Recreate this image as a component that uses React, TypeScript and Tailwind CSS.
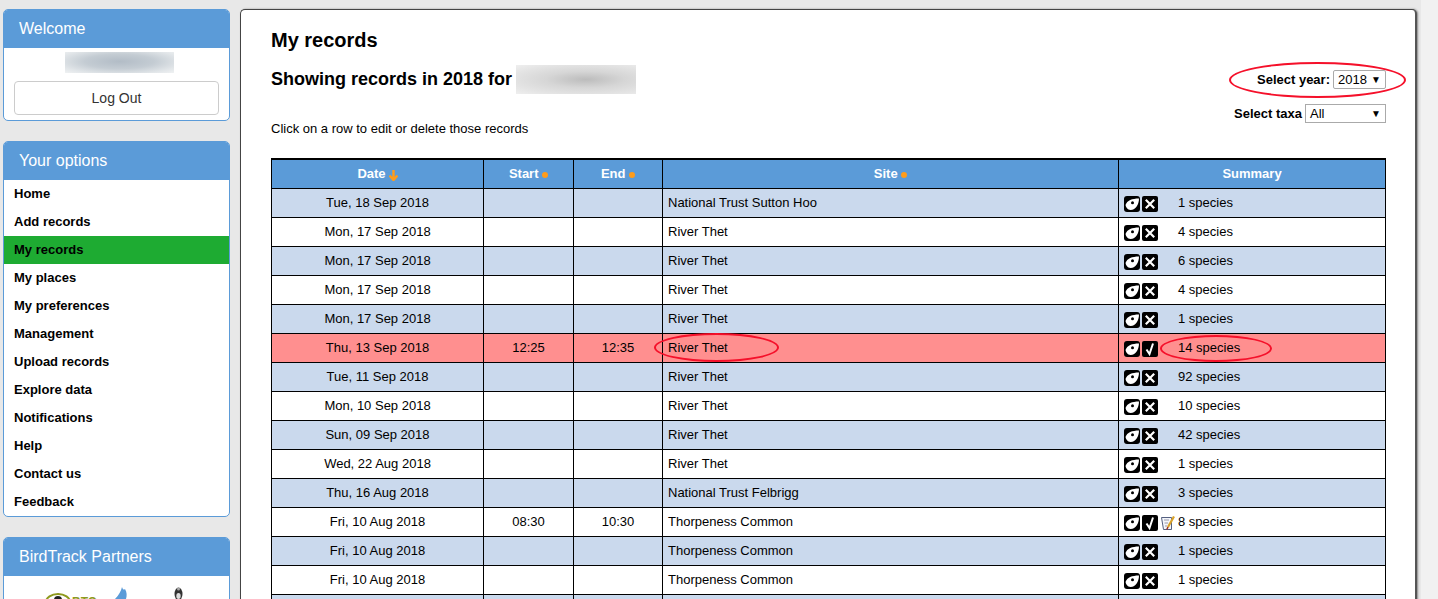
const rows: [string, string, string, string, string, string?][] = [
  ["Tue, 18 Sep 2018", "", "", "National Trust Sutton Hoo", "1 species"],
  ["Mon, 17 Sep 2018", "", "", "River Thet", "4 species"],
  ["Mon, 17 Sep 2018", "", "", "River Thet", "6 species"],
  ["Mon, 17 Sep 2018", "", "", "River Thet", "4 species"],
  ["Mon, 17 Sep 2018", "", "", "River Thet", "1 species"],
  ["Thu, 13 Sep 2018", "12:25", "12:35", "River Thet", "14 species", "check"],
  ["Tue, 11 Sep 2018", "", "", "River Thet", "92 species"],
  ["Mon, 10 Sep 2018", "", "", "River Thet", "10 species"],
  ["Sun, 09 Sep 2018", "", "", "River Thet", "42 species"],
  ["Wed, 22 Aug 2018", "", "", "River Thet", "1 species"],
  ["Thu, 16 Aug 2018", "", "", "National Trust Felbrigg", "3 species"],
  ["Fri, 10 Aug 2018", "08:30", "10:30", "Thorpeness Common", "8 species", "note"],
  ["Fri, 10 Aug 2018", "", "", "Thorpeness Common", "1 species"],
  ["Fri, 10 Aug 2018", "", "", "Thorpeness Common", "1 species"],
  ["", "", "", "", ""],
];

const menu = ["Home", "Add records", "My records", "My places", "My preferences", "Management", "Upload records", "Explore data", "Notifications", "Help", "Contact us", "Feedback"];

function Eye() {
  return (
    <svg width="16" height="16" viewBox="0 0 16 16" className="block shrink-0">
      <rect width="16" height="16" rx="3" fill="#000" />
      <path d="M1.5 9C3 4.5 8 2.5 15 2.5C15 8 12 14 6.5 14C3.5 14 2 11 1.5 9Z" fill="#fff" />
      <circle cx="8.5" cy="6.8" r="1.5" fill="#000" />
    </svg>
  );
}
function Cross() {
  return (
    <svg width="16" height="16" viewBox="0 0 16 16" className="block shrink-0">
      <rect width="16" height="16" rx="2" fill="#000" />
      <path d="M3.8 3.8L12.2 12.2M12.2 3.8L3.8 12.2" stroke="#fff" strokeWidth="2.2" />
    </svg>
  );
}
function Check() {
  return (
    <svg width="16" height="16" viewBox="0 0 16 16" className="block shrink-0">
      <rect width="16" height="16" rx="2" fill="#000" />
      <path d="M4.5 8.5L7.5 13L11 2.5" stroke="#fff" strokeWidth="2" fill="none" />
    </svg>
  );
}
function Note() {
  return (
    <svg width="14" height="14" viewBox="0 0 14 14" className="ml-[1px] block shrink-0">
      <path d="M0.5 1.5H10.5V13.5H2.5Z" fill="#f4f6fb" stroke="#556080" />
      <path d="M3 4H8M3.5 7H7M4 10H6" stroke="#99a" />
      <path d="M13 0.5L7 11" stroke="#d9a22a" strokeWidth="2.2" />
      <path d="M7 11L5.8 13.5" stroke="#a03020" strokeWidth="1.5" />
    </svg>
  );
}
function Panel({ title, children, className = "" }: { title: string; children: React.ReactNode; className?: string }) {
  return (
    <div className={`rounded-[5px] border border-[#5b9bd8] bg-white overflow-hidden ${className}`}>
      <div className="-mt-px h-[39px] bg-[#5b9bd8] pl-[15px] pt-[10px] text-[16px] leading-[20px] text-white">{title}</div>
      {children}
    </div>
  );
}

const Dot = () => <span className="inline-block size-[6px] rounded-full bg-[#ff9c1a]" />;

export default function App() {
  return (
    <div className="flex h-[599px] w-[1438px] overflow-hidden bg-[#e8e8e8] font-['Liberation_Sans',Arial,sans-serif] text-black">
      <aside className="ml-[3px] mr-[10px] mt-[9px] w-[227px] shrink-0">
        <Panel title="Welcome" className="h-[112px]">
          <div className="ml-[61px] mt-1 h-[21px] w-[109px] bg-[radial-gradient(ellipse_at_50%_45%,#b2bcc6,#c4ccd3_45%,#e2e6e9_80%,#f0f2f3)]" />
          <div className="mx-[10px] mt-2 flex h-[34px] items-center justify-center rounded-[4px] border border-[#ccc] text-[14px] text-[#333]">Log Out</div>
        </Panel>
        <Panel title="Your options" className="mt-5 h-[376px]">
          <ul>
            {menu.map((m) => (
              <li key={m} className={`h-[28px] pl-[10px] text-[13px] font-bold leading-[27px] ${m === "My records" ? "bg-[#1eab32]" : ""}`}>{m}</li>
            ))}
          </ul>
        </Panel>
        <Panel title="BirdTrack Partners" className="mt-5 h-[100px]">
          <div className="relative h-[30px]">
            <svg width="160" height="30" viewBox="0 0 160 30" className="absolute left-[38px] top-[11px]">
              <ellipse cx="16" cy="15" rx="12" ry="8" fill="none" stroke="#8f9a1e" strokeWidth="2" />
              <circle cx="16" cy="13" r="4" fill="#222" />
              <text x="30" y="19" fontSize="12" fontWeight="bold" fill="#8f9a1e">BTO</text>
              <path d="M73 12C77 8 79 4 80 0C81 3 82 3 83 2C85 5 85 9 84 12Z" fill="#5b9bd8" />
              <ellipse cx="136.5" cy="7" rx="4" ry="6.5" fill="#333" />
              <ellipse cx="136.5" cy="9" rx="2.2" ry="3" fill="#ddd" />
              <circle cx="136.5" cy="2" r="1.5" fill="#aaa" />
            </svg>
          </div>
        </Panel>
      </aside>

      <main className="relative mt-[9px] h-[700px] w-[1177px] shrink-0 rounded-[5px] border border-r-2 border-[#444] border-r-[#555] bg-white px-[30px] shadow-[1px_0_2px_#888]">
        <h1 className="mt-[18px] text-[20px] font-bold leading-[24px]">My records</h1>
        <div className="mt-[13px] flex items-center">
          <h2 className="mb-[2px] text-[18px] font-bold leading-[24px]">Showing records in 2018 for</h2>
          <div className="ml-[4px] h-[29px] w-[120px] bg-[radial-gradient(ellipse_at_58%_50%,#bcbcbc,#d6d6d6_40%,#e4e4e4_75%,#efefef)]" />
        </div>
        <div className="mt-[27px] text-[13px] leading-[15px]">Click on a row to edit or delete those records</div>

        <div className="absolute right-[29px] top-[60px] flex items-center gap-[3px] text-[13px] font-bold">
          <span>Select year:</span>
          <span className="flex h-[19px] w-[53px] items-center justify-between rounded-[2px] border border-[#aaa] pl-1 pr-[4px] font-normal">2018<span className="text-[10px]">▼</span></span>
        </div>
        <div className="absolute right-[29px] top-[94px] flex items-center gap-[3px] text-[13px] font-bold">
          <span>Select taxa</span>
          <span className="flex h-[19px] w-[81px] items-center justify-between border border-[#aaa] pl-1 pr-[4px] font-normal">All<span className="text-[10px]">▼</span></span>
        </div>

        <table className="mt-[22px] w-[1114px] table-fixed border-collapse border-t-2 border-black text-[13px]">
          <colgroup>
            <col className="w-[212px]" />
            <col className="w-[90px]" />
            <col className="w-[89px]" />
            <col className="w-[456px]" />
            <col className="w-[267px]" />
          </colgroup>
          <thead>
            <tr className="h-[29px] bg-[#5b9bd8] text-white">
              <th className="border border-black p-0 font-bold">
                <span className="inline-flex items-center gap-[3px]">
                  Date
                  <svg width="9" height="11" viewBox="0 0 9 11" className="mt-[3px]">
                    <path d="M4.5 0V9M0.5 5.5L4.5 10L8.5 5.5" stroke="#ff9c1a" strokeWidth="2.4" fill="none" />
                  </svg>
                </span>
              </th>
              <th className="border border-black p-0 font-bold">Start <Dot /></th>
              <th className="border border-black p-0 font-bold">End <Dot /></th>
              <th className="border border-black p-0 font-bold">Site <Dot /></th>
              <th className="border border-black p-0 font-bold">Summary</th>
            </tr>
          </thead>
          <tbody>
            {rows.map((r, i) => {
              const bg = r[5] === "check" ? "bg-[#ff8f8f]" : i % 2 === 0 ? "bg-[#cad9ed]" : "bg-white";
              return (
                <tr key={i} className={`h-[29px] ${bg}`}>
                  <td className="border border-black p-0 text-center">{r[0]}</td>
                  <td className="border border-black p-0 text-center">{r[1]}</td>
                  <td className="border border-black p-0 text-center">{r[2]}</td>
                  <td className="border border-black py-0 pl-[5px] pr-0">{r[3]}</td>
                  <td className="border border-black p-0">
                    {r[4] && (
                      <div className="flex items-center pl-[5px]">
                        <div className="mt-[2px] flex w-[54px] items-center gap-[2px]">
                          <Eye />
                          {r[5] ? <Check /> : <Cross />}
                          {r[5] === "note" && <Note />}
                        </div>
                        <span>{r[4]}</span>
                      </div>
                    )}
                  </td>
                </tr>
              );
            })}
          </tbody>
        </table>

        <div className="absolute left-[988px] top-[52px] h-[36px] w-[177px] rounded-[50%] border-2 border-[#f5102a]" />
        <div className="absolute left-[413px] top-[323px] h-[29px] w-[125px] rounded-[50%] border-2 border-[#f5102a]" />
        <div className="absolute left-[919px] top-[325px] h-[27px] w-[112px] rounded-[50%] border-2 border-[#f5102a]" />
      </main>
      <div className="ml-[4px] flex-1 bg-[#f1f1f1]" />
    </div>
  );
}
